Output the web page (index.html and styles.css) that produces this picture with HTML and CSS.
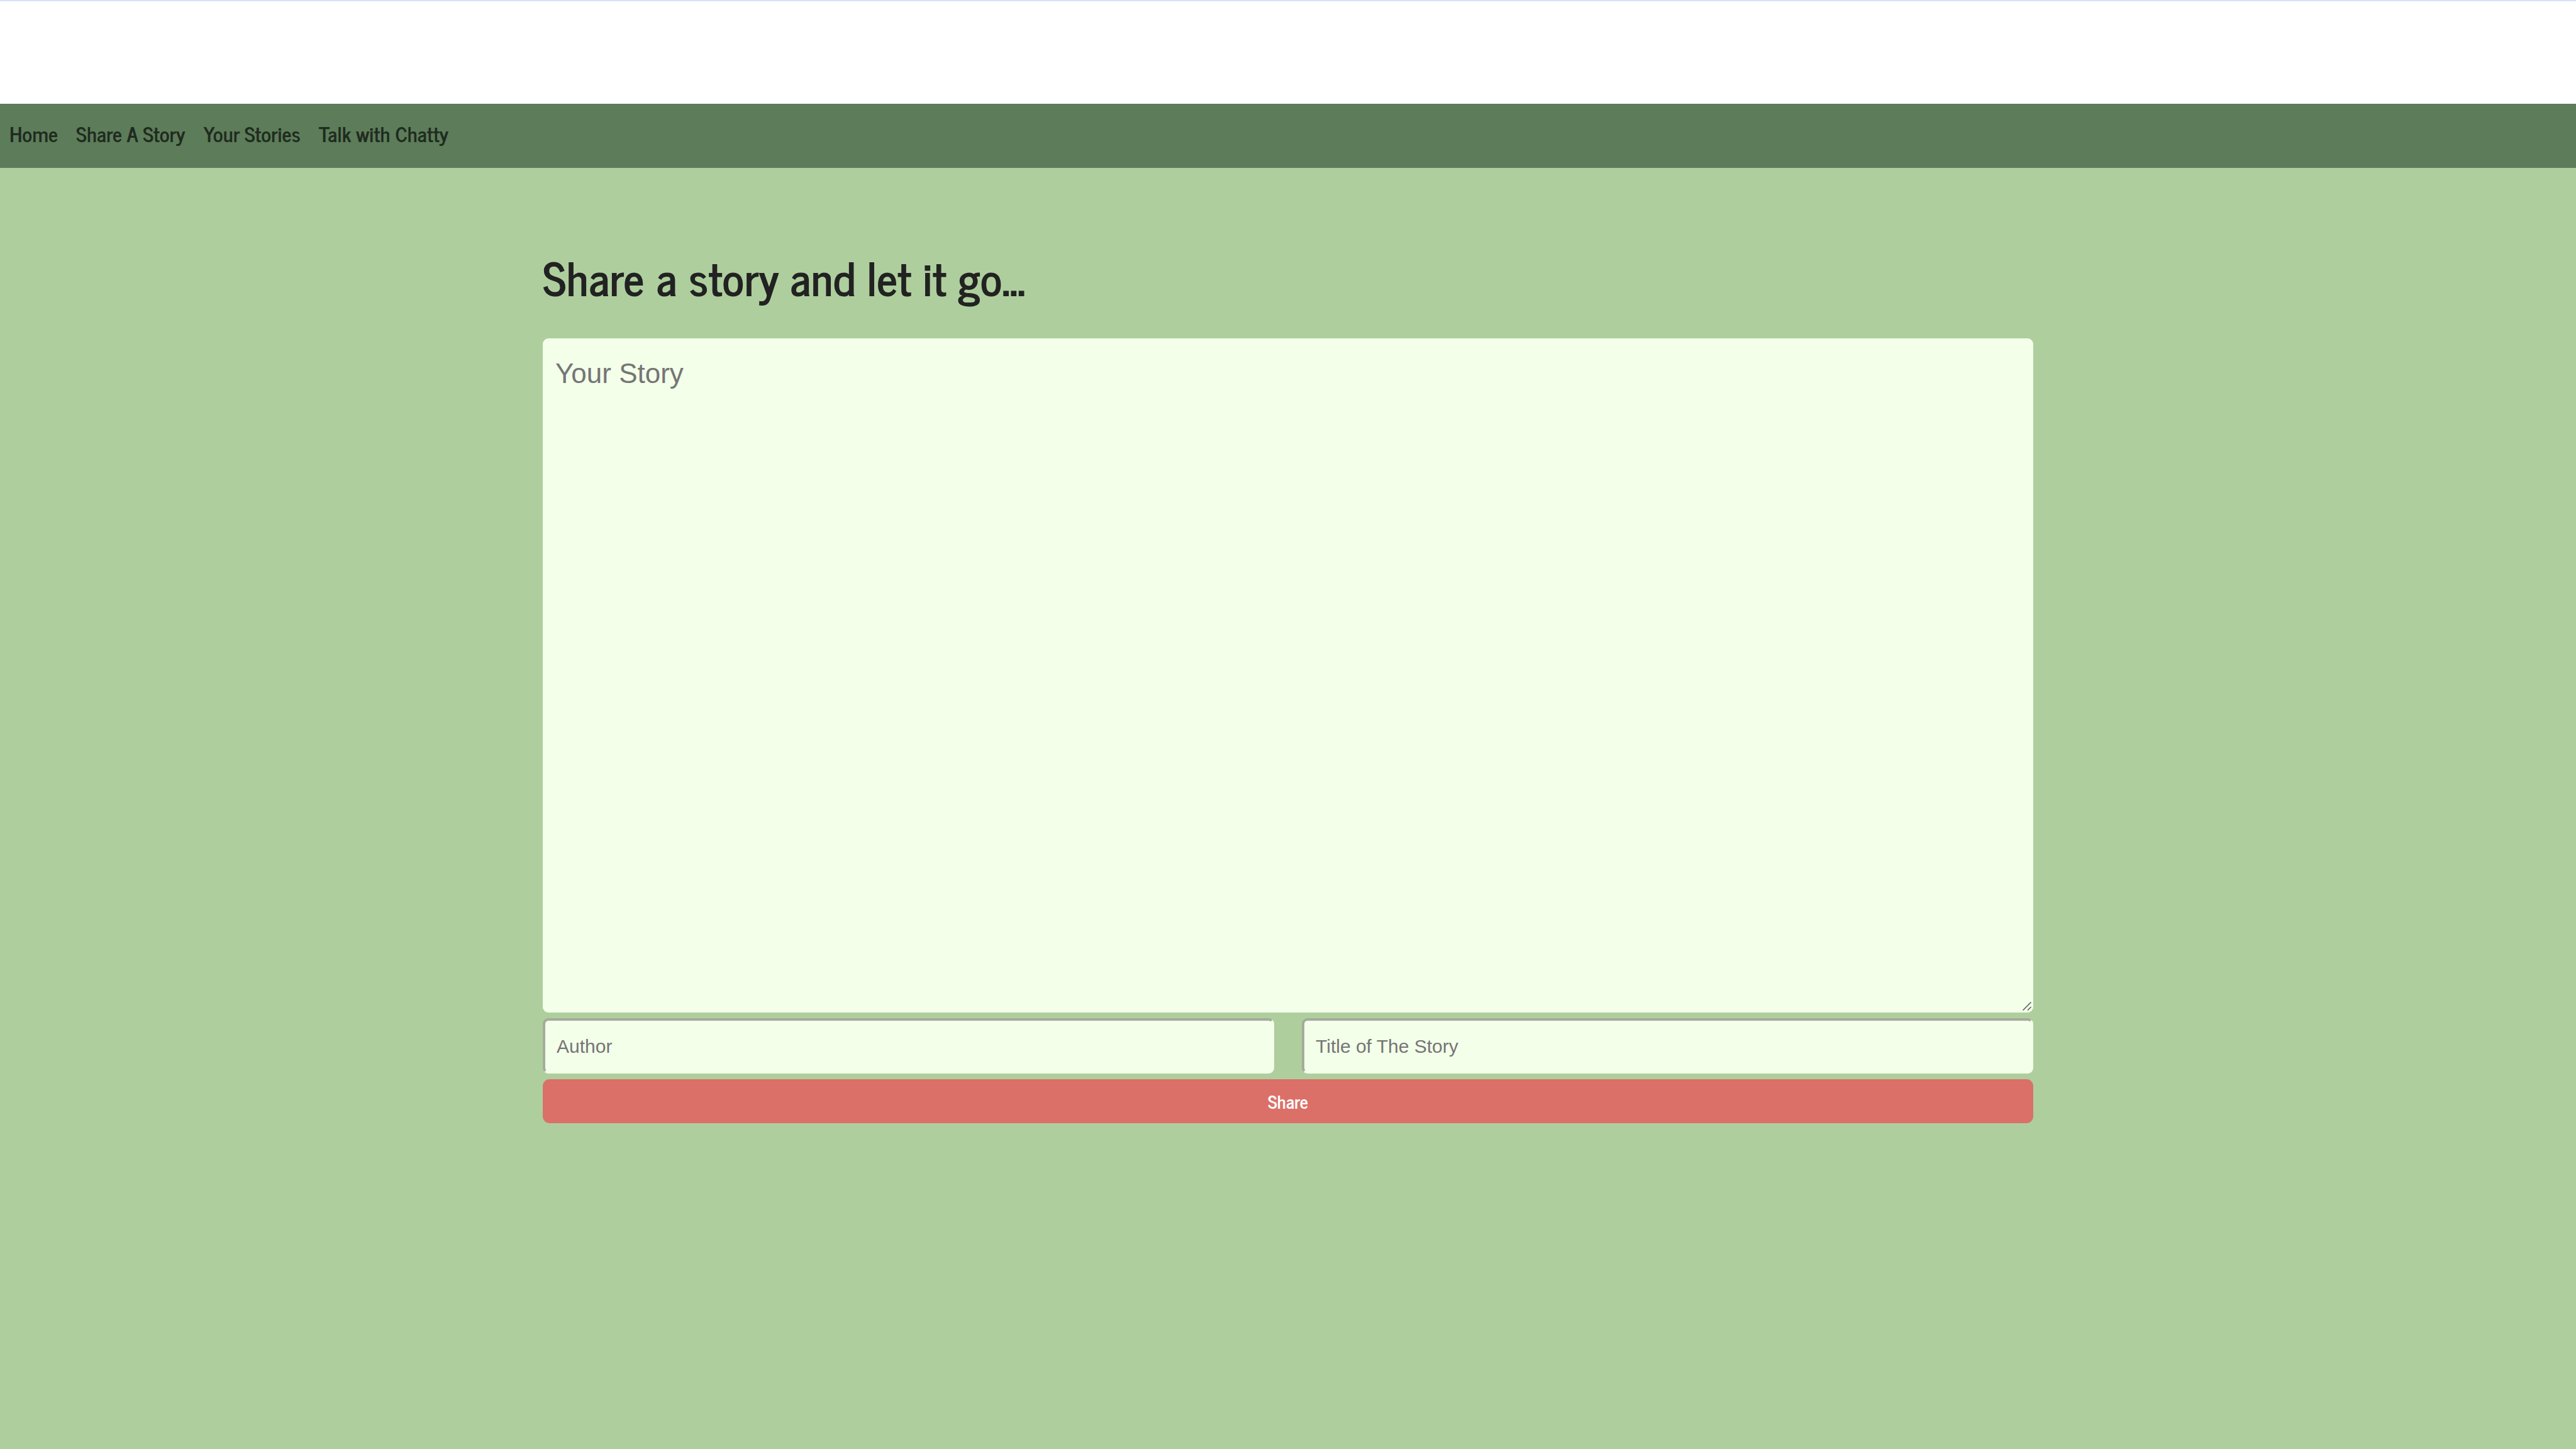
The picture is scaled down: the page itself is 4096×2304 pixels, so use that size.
FILE: index.html
```html
<!DOCTYPE html>
<html lang="en">
<head>
<meta charset="utf-8">
<title>Share a story</title>
<link rel="stylesheet" href="styles.css">
</head>
<body>
<header class="banner"></header>
<nav class="nav">
<a href="#">Home</a>
<a href="#">Share A Story</a>
<a href="#">Your Stories</a>
<a href="#">Talk with Chatty</a>
</nav>
<main class="content">
<h1 class="title">Share a story and let it go...</h1>
<form class="form">
<div class="story-box">
<textarea class="story" placeholder="Your Story" aria-label="Your Story"></textarea>
<svg class="grip" viewBox="0 0 14 14" aria-hidden="true"><path d="M0.5 13.5L13.5 0.5M8 13.5L13.5 8"/></svg>
</div>
<div class="fields">
<input class="field" type="text" placeholder="Author" aria-label="Author">
<input class="field" type="text" placeholder="Title of The Story" aria-label="Title of The Story">
</div>
<button class="share" type="button">Share</button>
</form>
</main>
</body>
</html>
```
FILE: styles.css
```css
* {
  box-sizing: border-box;
}

body {
  margin: 0;
  min-height: 100vh;
  background: #aecf9d;
  color: #222;
  font-family: "News Cycle", "Noto Sans CJK SC", sans-serif;
}

.banner {
  height: 165px;
  background: #fff;
  border-top: 2px solid #d6e2fb;
}

.nav {
  display: flex;
  align-items: center;
  gap: 29px;
  height: 102px;
  padding: 0 15px 8px;
  background: #5d7c59;
}

.nav a {
  color: #1f2b20;
  font-size: 33px;
  font-weight: 700;
  line-height: 40px;
  text-decoration: none;
}

.content {
  max-width: 2370px;
  margin: 0 auto;
  padding-top: 122px;
}

.title {
  margin: 0 0 49px;
  font-size: 73px;
  font-weight: 700;
  line-height: 100px;
}

.form {
  display: flex;
  flex-direction: column;
  gap: 9px;
}

.story-box {
  position: relative;
}

.story {
  display: block;
  width: 100%;
  height: 1072px;
  padding: 31px 20px;
  border: 0;
  border-radius: 9px;
  background: #f3ffe9;
  font-family: "Liberation Sans", Arial, sans-serif;
  font-size: 44px;
  line-height: 50px;
  resize: none;
}

.grip {
  position: absolute;
  right: 3px;
  bottom: 3px;
  width: 14px;
  height: 14px;
  fill: none;
  stroke: #555;
  stroke-width: 1.5;
}

.fields {
  display: flex;
  gap: 44px;
}

.field {
  flex: 1;
  min-width: 0;
  height: 88px;
  padding: 2px 18px 0;
  border: 4px solid #f3ffe9;
  border-top-color: #a5ab9c;
  border-left-color: #a5ab9c;
  border-radius: 9px;
  background: #f3ffe9;
  font-family: "Liberation Sans", Arial, sans-serif;
  font-size: 30px;
}

.story::placeholder,
.field::placeholder {
  color: #757575;
}

.share {
  height: 70px;
  padding: 0;
  border: 0;
  border-radius: 11px;
  background: #db7068;
  color: #fff;
  font-family: inherit;
  font-size: 29px;
  font-weight: 700;
  line-height: 40px;
}
```
